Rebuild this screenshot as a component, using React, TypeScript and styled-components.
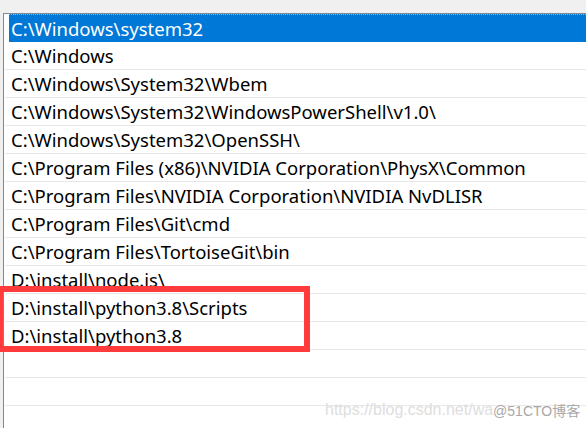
import styled, { createGlobalStyle } from 'styled-components';

const GlobalStyle = createGlobalStyle`
	html, body {
		margin: 0;
		padding: 0;
		background: #f0f0f0;
		overflow: hidden;
	}
`;

const paths = [
	'C:\\Windows\\system32',
	'C:\\Windows',
	'C:\\Windows\\System32\\Wbem',
	'C:\\Windows\\System32\\WindowsPowerShell\\v1.0\\',
	'C:\\Windows\\System32\\OpenSSH\\',
	'C:\\Program Files (x86)\\NVIDIA Corporation\\PhysX\\Common',
	'C:\\Program Files\\NVIDIA Corporation\\NVIDIA NvDLISR',
	'C:\\Program Files\\Git\\cmd',
	'C:\\Program Files\\TortoiseGit\\bin',
	'D:\\install\\node.js\\',
	'D:\\install\\python3.8\\Scripts',
	'D:\\install\\python3.8',
	'',
	'',
	'',
];

const App = () => {
	return (
		<>
			<GlobalStyle />
			<Page>
				<ListBox>
					{paths.map((p, i) => (
						<Row key={i} $selected={i === 0}>
							<RowText $selected={i === 0}>{p}</RowText>
						</Row>
					))}
				</ListBox>
				<Highlight />
				<Watermark>
					<WatermarkUrl>https://blog.csdn.net/wa</WatermarkUrl>
					<WatermarkBrand>@51CTO博客</WatermarkBrand>
				</Watermark>
			</Page>
		</>
	);
};

export default App;

const Page = styled.div`
	position: relative;
	width: 586px;
	height: 428px;
	padding: 13px 0 0 3px;
	box-sizing: border-box;
	background: #f0f0f0;
	overflow: hidden;
`;

const ListBox = styled.div`
	height: 100%;
	background: #ffffff;
	border-top: 1px solid #828790;
	border-left: 1px solid #828790;
	padding-left: 1px;
	display: flex;
	flex-direction: column;
`;

const Row = styled.div<{ $selected: boolean }>`
	height: 27px;
	flex: none;
	display: flex;
	align-items: center;
	border-bottom: 1px solid #e8e8e8;
	background: #ffffff;
	color: #000000;

	${({ $selected }) =>
		$selected &&
		`
		margin-left: 4px;
		height: 26px;
		background: #0078d7;
		color: #ffffff;
		border-top: 1px dotted #f0a060;
		border-bottom-color: #0078d7;
	`}
`;

const RowText = styled.span<{ $selected: boolean }>`
	font-family: 'Noto Sans', 'Noto Sans CJK SC', sans-serif;
	font-size: 18.5px;
	line-height: 27px;
	padding-left: ${({ $selected }) => ($selected ? '2px' : '6px')};
	white-space: nowrap;
`;

const Highlight = styled.div`
	position: absolute;
	left: -3px;
	top: 286px;
	width: 313px;
	height: 66px;
	border: 6px solid #ff3b3b;
	box-sizing: border-box;
`;

const Watermark = styled.div`
	position: absolute;
	left: 325px;
	top: 400px;
	display: flex;
	align-items: center;
	white-space: nowrap;
`;

const WatermarkUrl = styled.span`
	font-family: 'Liberation Sans', Arial, sans-serif;
	font-size: 16px;
	color: #dedede;
`;

const WatermarkBrand = styled.span`
	margin-left: 0;
	font-family: 'Liberation Sans', 'Noto Sans CJK SC', sans-serif;
	font-size: 14px;
	color: #a8a8a8;
	text-shadow: 0 0 2px #ffffff;
`;
